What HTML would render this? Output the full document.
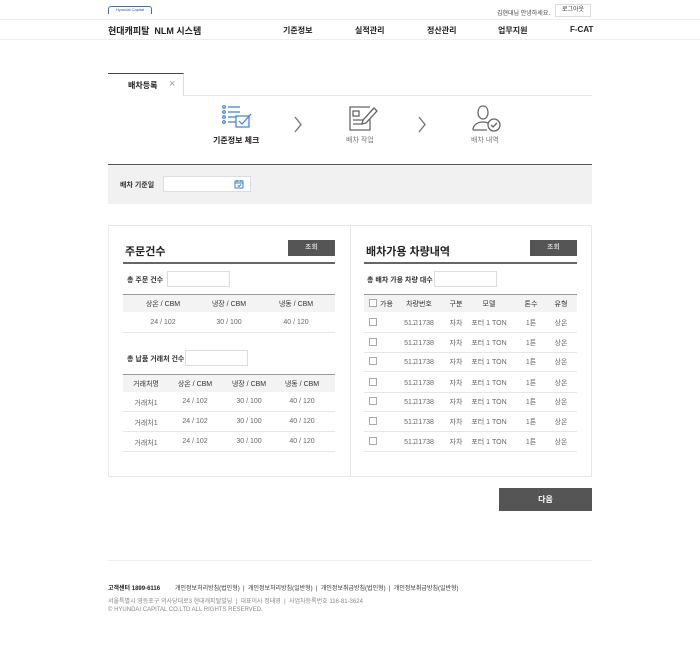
<!DOCTYPE html>
<html><head><meta charset="utf-8"><style>
*{margin:0;padding:0;box-sizing:border-box}
body{width:700px;height:671px;background:#fff;font-family:"Liberation Sans","Noto Sans CJK KR",sans-serif;color:#333;position:relative;overflow:hidden}
.a{position:absolute;white-space:nowrap}
.f7{font-size:7px}.f8{font-size:8px}
.b{font-weight:bold}
.ln{position:absolute;height:1px;background:#e6e6e6}
.inp{position:absolute;border:1px solid #ddd;background:#fff;height:17px}
.btn{position:absolute;background:#555;color:#fff;font-size:7px;text-align:center;line-height:16px;height:16px;width:47px}
.th{position:absolute;background:#f3f3f3;border-top:1px solid #999;height:18px}
.c{position:absolute;font-size:7px;transform:translateX(-50%);white-space:nowrap}
.cb{position:absolute;width:8px;height:8px;border:1px solid #aaa;background:#fff}
</style></head><body>
<div class="a" style="left:108px;top:6px;width:44px;height:8px;border:1.5px solid #3a6fc8;border-bottom:none;border-radius:3px 3px 0 0;font-size:4px;color:#2b5aa8;line-height:6px;text-align:center">Hyundai Capital</div>
<div class="a" style="left:497px;top:8px;color:#444;font-size:6px">김현대님 안녕하세요.</div>
<div class="a" style="left:555px;top:4px;width:36px;height:13px;border:1px solid #ddd;text-align:center;line-height:11px;font-size:6px">로그아웃</div>
<div class="ln" style="left:0;top:19px;width:700px;background:#eee"></div>
<div class="a b" style="left:108px;top:24px;font-size:9px;color:#222">현대캐피탈 &nbsp;NLM 시스템</div>
<div class="a b f8" style="left:283px;top:25px;color:#222">기준정보</div>
<div class="a b f8" style="left:355px;top:25px;color:#222">실적관리</div>
<div class="a b f8" style="left:427px;top:25px;color:#222">정산관리</div>
<div class="a b f8" style="left:498px;top:25px;color:#222">업무지원</div>
<div class="a b f8" style="left:570px;top:25px;color:#222">F-CAT</div>
<div class="ln" style="left:0;top:39px;width:700px;background:#eee"></div>

<div class="a" style="left:108px;top:73px;width:76px;height:23px;border-top:1px solid #444;border-right:1px solid #ddd"></div>
<div class="a b f8" style="left:128px;top:80px;color:#222">배차등록</div>
<div class="a" style="left:169px;top:78px;font-size:11px;color:#999">×</div>
<div class="ln" style="left:184px;top:95px;width:408px"></div>

<svg class="a" style="left:222px;top:105px" width="32" height="28" viewBox="0 0 32 28" fill="none" stroke="#3b7de0" stroke-width="1.2"><circle cx="2" cy="2" r="1.3"/><circle cx="2" cy="7" r="1.3"/><circle cx="2" cy="12" r="1.3"/><circle cx="2" cy="17" r="1.3"/><path d="M6 2h12M6 7h12M6 12h8M6 17h8"/><rect x="14" y="11" width="13" height="11"/><path d="M17 16l3 3 9-10"/></svg>
<svg class="a" style="left:348px;top:105px" width="30" height="28" viewBox="0 0 30 28" fill="none" stroke="#666" stroke-width="1.3"><path d="M22 14v11H2V2h20"/><rect x="5" y="6" width="6" height="5"/><path d="M5 15h11M5 19h9"/><path d="M26 3l3 3-11 12-4 1 1-4z"/></svg>
<svg class="a" style="left:472px;top:105px" width="30" height="28" viewBox="0 0 30 28" fill="none" stroke="#666" stroke-width="1.3"><path d="M11 1c-4 0-5 4-5 7s2 6 5 6 5-3 5-6-1-7-5-7z"/><path d="M1 25c0-6 6-8 10-8 2 0 4 .5 5 1M1 25h14"/><circle cx="22" cy="20" r="6"/><path d="M19 20l2 2 4-4"/></svg>
<div class="a b f8" style="left:213px;top:135px;color:#222">기준정보 체크</div>
<div class="a f7" style="left:346px;top:135px;color:#777">배차 작업</div>
<div class="a f7" style="left:471px;top:135px;color:#777">배차 내역</div>
<svg class="a" style="left:293px;top:116px" width="10" height="17"><path d="M2 1l6 7.5L2 16" stroke="#777" stroke-width="1.4" fill="none"/></svg>
<svg class="a" style="left:417px;top:116px" width="10" height="17"><path d="M2 1l6 7.5L2 16" stroke="#777" stroke-width="1.4" fill="none"/></svg>

<div class="a" style="left:108px;top:164px;width:484px;height:40px;background:#f1f1f1;border-top:1.5px solid #555"></div>
<div class="a b f7" style="left:120px;top:180px;color:#333">배차 기준일</div>
<div class="inp" style="left:163px;top:176px;width:88px;height:16px"></div>
<svg class="a" style="left:234px;top:179px" width="10" height="10" fill="none" stroke="#3b7de0" stroke-width="1"><rect x="1" y="2" width="8" height="7"/><path d="M1 4h8M3 1v2M7 1v2M3.5 6.5l1.5 1 2-2"/></svg>

<div class="a" style="left:108px;top:225px;width:484px;height:252px;border:1px solid #e6e6e6"></div>
<div class="a" style="left:350px;top:225px;width:1px;height:252px;background:#e6e6e6"></div>

<div class="a b" style="left:125px;top:243px;font-size:11px;color:#222">주문건수</div>
<div class="btn" style="left:288px;top:240px">조회</div>
<div class="a" style="left:123px;top:262px;width:212px;height:2px;background:#666"></div>
<div class="a b f7" style="left:127px;top:275px">총 주문 건수</div>
<div class="inp" style="left:167px;top:271px;width:63px;height:16px"></div>
<div class="th" style="left:123px;top:294px;width:212px"></div>
<div class="c" style="left:163px;top:299px">상온 / CBM</div>
<div class="c" style="left:229px;top:299px">냉장 / CBM</div>
<div class="c" style="left:296px;top:299px">냉동 / CBM</div>
<div class="c" style="left:163px;top:319px;color:#666">24 / 102</div>
<div class="c" style="left:229px;top:319px;color:#666">30 / 100</div>
<div class="c" style="left:296px;top:319px;color:#666">40 / 120</div>
<div class="ln" style="left:123px;top:332px;width:212px"></div>
<div class="a b f7" style="left:127px;top:354px">총 납품 거래처 건수</div>
<div class="inp" style="left:185px;top:350px;width:63px;height:16px"></div>
<div class="th" style="left:123px;top:374px;width:212px"></div>
<div class="c" style="left:146px;top:379px">거래처명</div>
<div class="c" style="left:195px;top:379px">상온 / CBM</div>
<div class="c" style="left:249px;top:379px">냉장 / CBM</div>
<div class="c" style="left:302px;top:379px">냉동 / CBM</div>
<div class="c" style="left:146px;top:398px;color:#666">거래처1</div><div class="c" style="left:195px;top:398px;color:#666">24 / 102</div><div class="c" style="left:249px;top:398px;color:#666">30 / 100</div><div class="c" style="left:302px;top:398px;color:#666">40 / 120</div>
<div class="ln" style="left:123px;top:411px;width:212px"></div>
<div class="c" style="left:146px;top:418px;color:#666">거래처1</div><div class="c" style="left:195px;top:418px;color:#666">24 / 102</div><div class="c" style="left:249px;top:418px;color:#666">30 / 100</div><div class="c" style="left:302px;top:418px;color:#666">40 / 120</div>
<div class="ln" style="left:123px;top:431px;width:212px"></div>
<div class="c" style="left:146px;top:438px;color:#666">거래처1</div><div class="c" style="left:195px;top:438px;color:#666">24 / 102</div><div class="c" style="left:249px;top:438px;color:#666">30 / 100</div><div class="c" style="left:302px;top:438px;color:#666">40 / 120</div>
<div class="ln" style="left:123px;top:451px;width:212px"></div>

<div class="a b" style="left:366px;top:243px;font-size:11px;color:#222">배차가용 차량내역</div>
<div class="btn" style="left:530px;top:240px">조회</div>
<div class="a" style="left:364px;top:262px;width:213px;height:2px;background:#666"></div>
<div class="a b f7" style="left:367px;top:275px">총 배차 가용 차량 대수</div>
<div class="inp" style="left:434px;top:271px;width:63px;height:16px"></div>
<div class="th" style="left:364px;top:294px;width:213px"></div>
<div class="cb" style="left:369px;top:299px"></div>
<div class="a f7" style="left:380px;top:299px">가용</div>
<div class="c" style="left:419px;top:299px">차량번호</div>
<div class="c" style="left:456px;top:299px">구분</div>
<div class="c" style="left:489px;top:299px">모델</div>
<div class="c" style="left:531px;top:299px">톤수</div>
<div class="c" style="left:561px;top:299px">유형</div>
<div id="rows"></div>
<script>
var ys=[322,342,361,382,401,421,441],h='';
ys.forEach(function(y){h+='<div class="cb" style="left:369px;top:'+(y-4)+'px"></div>'+
'<div class="c" style="left:419px;top:'+(y-4)+'px;color:#666">51고1738</div>'+
'<div class="c" style="left:456px;top:'+(y-4)+'px;color:#666">자차</div>'+
'<div class="c" style="left:489px;top:'+(y-4)+'px;color:#666">포터 1 TON</div>'+
'<div class="c" style="left:531px;top:'+(y-4)+'px;color:#666">1톤</div>'+
'<div class="c" style="left:561px;top:'+(y-4)+'px;color:#666">상온</div>'+
'<div class="ln" style="left:364px;top:'+(y+10)+'px;width:213px"></div>';});
document.getElementById('rows').innerHTML=h;
</script>

<div class="a b" style="left:499px;top:488px;width:93px;height:23px;background:#555;color:#fff;font-size:8px;text-align:center;line-height:23px">다음</div>

<div class="ln" style="left:108px;top:560px;width:484px;background:#eee"></div>
<div class="a b" style="left:108px;top:583px;font-size:6px;color:#222">고객센터 1899-6116</div>
<div class="a" style="left:175px;top:583px;font-size:6px;color:#333">개인정보처리방침(법인형) &nbsp;| &nbsp;개인정보처리방침(일반형) &nbsp;| &nbsp;개인정보취급방침(법인형) &nbsp;| &nbsp;개인정보취급방침(일반형)</div>
<div class="a" style="left:108px;top:596px;font-size:6px;color:#888">서울특별시 영등포구 의사당대로3 현대캐피탈빌딩 &nbsp;| &nbsp;대표이사 정태영 &nbsp;| &nbsp;사업자등록번호 116-81-3624</div>
<div class="a" style="left:108px;top:607px;font-size:6px;color:#888">© HYUNDAI CAPITAL CO.LTD ALL RIGHTS RESERVED.</div>
</body></html>
